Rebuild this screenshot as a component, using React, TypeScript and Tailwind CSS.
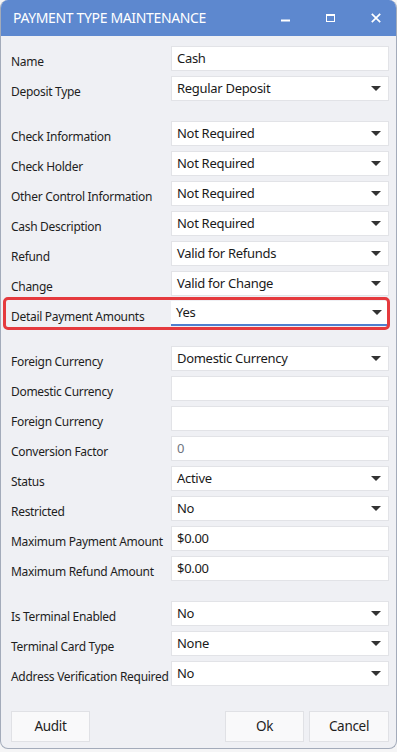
import React from "react";

const Arrow = () => (
  <svg width="10" height="5" viewBox="0 0 10 5" className="shrink-0">
    <polygon points="0,0 10,0 5,5" fill="#333333" />
  </svg>
);

type RowProps = {
  label: string;
  value?: string;
  select?: boolean;
  muted?: boolean;
  focused?: boolean;
};

const Row = ({ label, value = "", select = false, muted = false, focused = false }: RowProps) => (
  <div className="flex h-[25px]">
    <div className="w-[160px] shrink-0 h-[25px] leading-[32px] text-[12px] tracking-[-0.3px] text-[#1e1e1e] whitespace-nowrap">
      {label}
    </div>
    <div
      className={
        focused
          ? "flex-1 flex items-center bg-white border-b-2 border-[#4f7fcf] pl-[5px] pr-[7px]"
          : "flex-1 flex items-center bg-white border border-[#e2e3e7] pl-[5px] pr-[7px]"
      }
    >
      <span
        className={
          muted
            ? "flex-1 text-[13px] tracking-[-0.3px] text-[#6f7480] leading-none"
            : "flex-1 text-[13px] tracking-[-0.3px] text-[#1a1a1a] leading-none"
        }
      >
        {value}
      </span>
      {select && <Arrow />}
    </div>
  </div>
);

export default function App() {
  return (
    <div className="w-[397px] h-[752px] bg-[#f5f5f6] font-['Noto_Sans',sans-serif]">
      <div className="h-[749px] flex flex-col bg-[#eff0f4] border-x border-b border-[#a3abba] rounded-[8px] overflow-hidden">
        <div className="h-[36px] shrink-0 bg-[#5d88cf] flex items-center pl-[12px] pr-[15px]">
          <span className="text-white text-[14px] tracking-[-0.35px] leading-none">
            PAYMENT TYPE MAINTENANCE
          </span>
          <div className="ml-auto flex items-center gap-[36px]">
            <svg width="9" height="10" viewBox="0 0 9 10">
              <rect x="0" y="6.5" width="9" height="2" fill="white" />
            </svg>
            <svg width="9" height="10" viewBox="0 0 9 10">
              <rect x="0.5" y="1.5" width="8" height="7" fill="none" stroke="white" strokeWidth="1" />
              <rect x="0" y="1" width="9" height="2" fill="white" />
            </svg>
            <svg width="10" height="10" viewBox="0 0 10 10">
              <path d="M0.8 0.8 L9.2 9.2 M9.2 0.8 L0.8 9.2" stroke="white" strokeWidth="1.7" />
            </svg>
          </div>
        </div>

        <div className="flex flex-col pl-[10px] pr-[7px] pt-[10px]">
          <div className="flex flex-col gap-[5px]">
            <Row label="Name" value="Cash" />
            <Row label="Deposit Type" value="Regular Deposit" select />
          </div>

          <div className="flex flex-col gap-[5px] mt-[20px]">
            <Row label="Check Information" value="Not Required" select />
            <Row label="Check Holder" value="Not Required" select />
            <Row label="Other Control Information" value="Not Required" select />
            <Row label="Cash Description" value="Not Required" select />
            <Row label="Refund" value="Valid for Refunds" select />
            <Row label="Change" value="Valid for Change" select />
            <div className="relative">
              <Row label="Detail Payment Amounts" value="Yes" select focused />
              <div className="absolute left-[-8px] right-[-1px] top-[-4px] bottom-[-4px] border-[3px] border-[#e53a3e] rounded-[5px] pointer-events-none" />
            </div>
          </div>

          <div className="flex flex-col gap-[5px] mt-[20px]">
            <Row label="Foreign Currency" value="Domestic Currency" select />
            <Row label="Domestic Currency" />
            <Row label="Foreign Currency" />
            <Row label="Conversion Factor" value="0" muted />
            <Row label="Status" value="Active" select />
            <Row label="Restricted" value="No" select />
            <Row label="Maximum Payment Amount" value="$0.00" />
            <Row label="Maximum Refund Amount" value="$0.00" />
          </div>

          <div className="flex flex-col gap-[5px] mt-[20px]">
            <Row label="Is Terminal Enabled" value="No" select />
            <Row label="Terminal Card Type" value="None" select />
            <Row label="Address Verification Required" value="No" select />
          </div>

          <div className="flex mt-[25px] h-[31px]">
            <button className="w-[79px] h-[31px] bg-[#f9f9fa] border border-[#e0e1e5] text-[13.5px] tracking-[-0.3px] text-[#1e1e1e]">
              Audit
            </button>
            <button className="ml-auto w-[79px] h-[31px] bg-[#f9f9fa] border border-[#e0e1e5] text-[13.5px] tracking-[-0.3px] text-[#1e1e1e]">
              Ok
            </button>
            <button className="ml-[5px] w-[80px] h-[31px] bg-[#f9f9fa] border border-[#e0e1e5] text-[13.5px] tracking-[-0.3px] text-[#1e1e1e]">
              Cancel
            </button>
          </div>
        </div>
      </div>
    </div>
  );
}
